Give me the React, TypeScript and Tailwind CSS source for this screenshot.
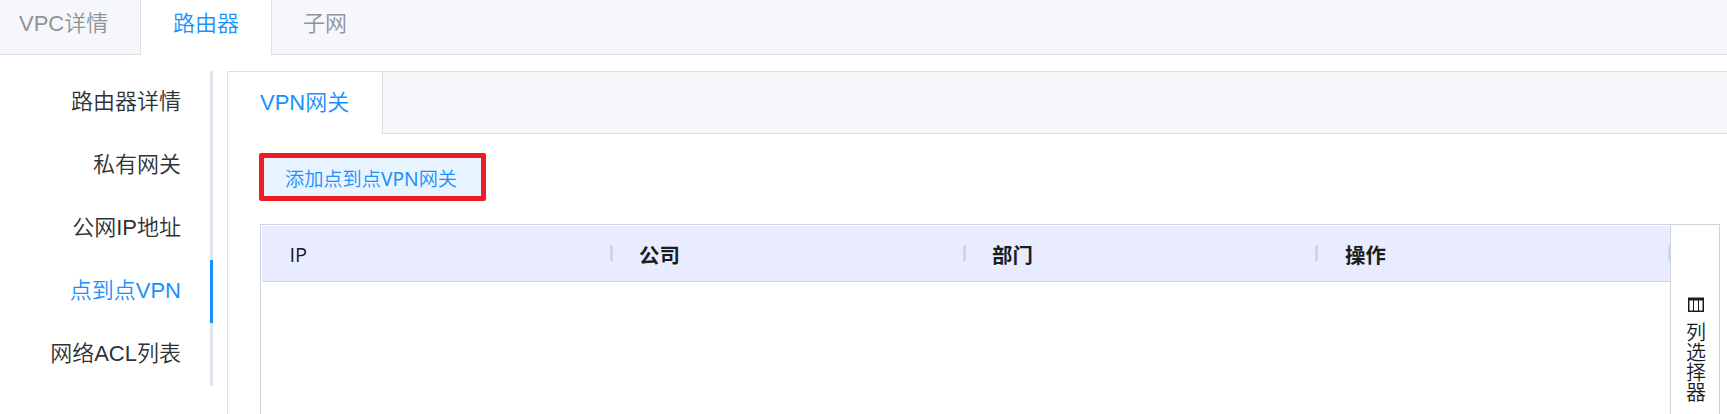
const topTabs = [
  { label: "VPC详情", cls: "w-[141px] pl-[19px] border-r border-b border-[#dcdfe6] text-[#909399]" },
  { label: "路由器", cls: "w-[130px] pl-[32px] bg-white text-[#1890ff]" },
  { label: "子网", cls: "flex-1 pl-[31px] border-l border-b border-[#dcdfe6] text-[#909399]" },
];

const menu = ["路由器详情", "私有网关", "公网IP地址", "点到点VPN", "网络ACL列表"];
const columns = [
  { label: "IP", cls: "w-[351px] pl-[27.5px] text-[20px] font-medium" },
  { label: "公司", cls: "w-[353px] pl-[26px] text-[20.4px] font-bold" },
  { label: "部门", cls: "w-[352px] pl-[26px] text-[20.4px] font-bold" },
  { label: "操作", cls: "w-[353px] pl-[27px] text-[20.4px] font-bold" },
];

function ColumnsIcon() {
  return (
    <svg width="16" height="16" viewBox="0 0 16 16" fill="none" stroke="#181d1f" className="ml-px block shrink-0">
      <path d="M0 2H16" strokeWidth="3" />
      <path d="M.75 1V15M15.25 1V15M0 14.25H16" strokeWidth="1.5" />
      <path d="M5.5 3V14M10.5 3V14" strokeWidth="1" />
    </svg>
  );
}

export default function App() {
  return (
    <div className="flex h-[414px] w-full flex-col overflow-hidden bg-white font-['Liberation_Sans','Noto_Sans_CJK_SC',sans-serif] text-[22px] font-[350]">
      <nav className="flex h-[55px] shrink-0 bg-[#f5f7fa]">
        {topTabs.map((t) => (
          <div key={t.label} className={`h-[55px] shrink-0 whitespace-nowrap leading-[48px] ${t.cls}`}>
            {t.label}
          </div>
        ))}
      </nav>
      <div className="flex min-h-0 flex-1 pt-4">
        <ul className="w-[213px] shrink-0">
          {menu.map((m) => (
            <li
              key={m}
              className={`h-[63px] border-r-[3px] pr-[29px] text-right leading-[62px] ${
                m === "点到点VPN" ? "border-[#1890ff] text-[#1890ff]" : "border-[#dfe4ed] text-[#303133]"
              }`}
            >
              {m}
            </li>
          ))}
        </ul>
        <section className="ml-[14px] flex min-w-0 flex-1 flex-col border-t border-l border-[#dcdfe6]">
          <div className="flex h-[62px] shrink-0 bg-[#f5f7fa]">
            <div className="w-[154px] bg-white pl-[32px] leading-[62px] text-[#1890ff]">VPN网关</div>
            <div className="flex-1 border-b border-l border-[#dcdfe6]" />
          </div>
          <button className="mt-[19px] ml-[31px] h-[48px] w-[227px] shrink-0 rounded-[2px] border-[5px] border-[#ee1c25] bg-[#e8f4ff] pl-[21px] text-left font-['Noto_Sans','Noto_Sans_CJK_SC',sans-serif] text-[19.2px] leading-[42px] whitespace-nowrap text-[#1890ff]">
            添加点到点<span className="font-normal">VPN</span>网关
          </button>
          <div className="mt-[23px] ml-[32px] flex min-h-0 w-[1460px] flex-1 border-x border-t border-[#d0d3e0] font-['Open_Sans','Noto_Sans_CJK_SC',sans-serif] text-[#181d1f]">
            <div className="min-w-0 flex-1 pt-px pl-px">
              <div className="flex h-[56px] overflow-hidden border-b border-[#d0d3e0] bg-[#e9ecff]">
                {columns.map((c) => (
                  <div key={c.label} className={`flex shrink-0 items-center justify-between ${c.cls}`}>
                    <span className="pt-[2px] leading-[52px]">{c.label}</span>
                    <span className="mb-px h-[16px] w-[3px] bg-[#d3d6dc]" />
                  </div>
                ))}
              </div>
            </div>
            <div className="flex w-[49px] shrink-0 flex-col items-center border-l border-[#d0d3e0] pt-[72px] text-[20px]">
              <ColumnsIcon />
              <span className="mt-[10px] ml-[2px] w-[20px] leading-[20px] break-all">列选择器</span>
            </div>
          </div>
        </section>
      </div>
    </div>
  );
}
